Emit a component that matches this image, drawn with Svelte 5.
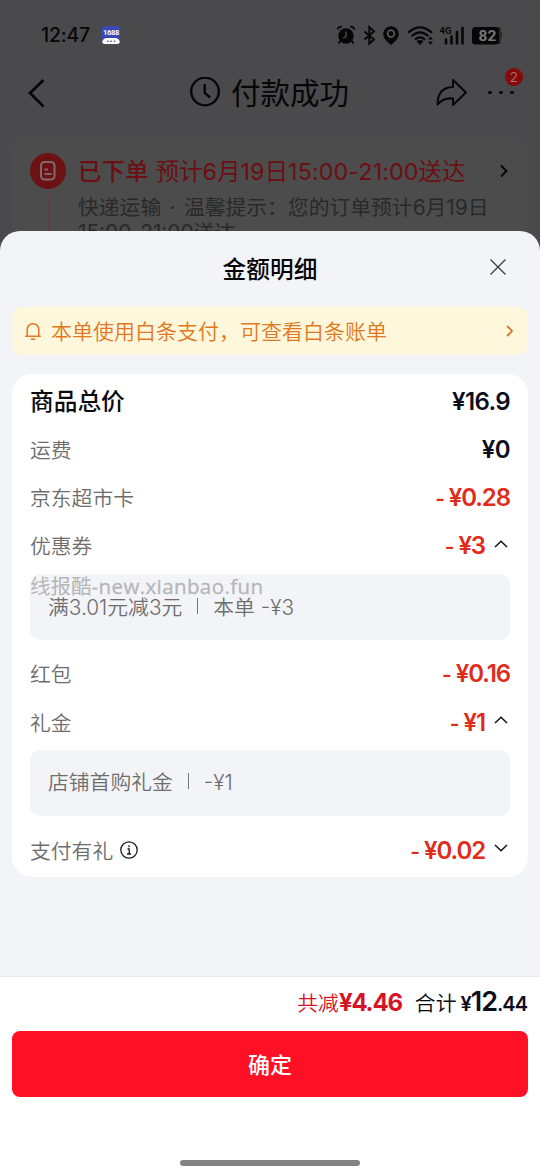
<script>
  const rows = [
    { label: '商品总价', value: '¥16.9', kind: 'total' },
    { label: '运费', value: '¥0', kind: 'plain' },
    { label: '京东超市卡', value: '¥0.28', kind: 'minus' },
    { label: '优惠券', value: '¥3', kind: 'minus', arrow: 'up', detail: ['满3.01元减3元', '本单 -¥3'], mark: true },
    { label: '红包', value: '¥0.16', kind: 'minus' },
    { label: '礼金', value: '¥1', kind: 'minus', arrow: 'up', detail: ['店铺首购礼金', '-¥1'] },
    { label: '支付有礼', value: '¥0.02', kind: 'minus', arrow: 'down', info: true }
  ];
</script>

<div class="screen">
  <div class="status">
    <span class="time">12:47</span>
    <span class="app"><b>1688</b><i>•••</i></span>
    <svg class="sysicons" width="170" height="24" viewBox="0 0 170 24">
      <g fill="#070707">
        <circle cx="11" cy="13" r="7.7" />
        <path d="M5.5 17.5L3.5 20.5M16.5 17.5L18.5 20.5M2.5 6.4Q3.3 3.5 7 3.6M19.5 6.4Q18.7 3.5 15 3.6" fill="none" stroke="#070707" stroke-width="1.8" />
        <path d="M11 8.5v5l-3 2" fill="none" stroke="#4a4a4c" stroke-width="1.5" />
        <path d="M29.5 8.5L39 16.5 34.3 20.7V4L39 8.5 29.5 16.5" fill="none" stroke="#070707" stroke-width="1.9" />
        <path d="M56 3.2a7.8 7.8 0 0 0-7.8 7.8c0 5 5 8.5 7.8 11 2.8-2.5 7.8-6 7.8-11A7.8 7.8 0 0 0 56 3.2z" />
        <circle cx="56" cy="10.6" r="3.4" fill="none" stroke="#626264" stroke-width="1.6" />
      </g>
      <g fill="none" stroke="#070707" stroke-width="2.1">
        <path d="M73 9.8Q85 -1.2 97 9.8M76.5 13.3Q85 5.5 93.5 13.3M80 16.6Q85 12.3 90 16.6" />
      </g>
      <path d="M81.5 18.3Q85 15.8 88.5 18.3L85 22z" fill="#070707" />
      <path d="M93 16.5l2.5-3 2.5 3zM93 18.7l2.5 3 2.5-3z" fill="#070707" />
      <text x="104.5" y="11" class="net">4G</text>
      <path d="M111 16.5v4M116.5 13.5v7M122 9v11.500M127.5 5v15.500" stroke="#070707" stroke-width="2.6" stroke-linecap="round" />
      <path d="M162 4h3q1 0 1 2v2q2.5 4 0 8v2q0 2-1 3h-3z" fill="#2b2b2c" />
      <rect x="137" y="4" width="27" height="17.5" rx="3.5" fill="#070707" />
      <text x="152.5" y="18.3" class="batt">82</text>
    </svg>
  </div>

  <header>
    <svg width="24" height="34" viewBox="0 0 24 34"><path d="M19.5 4L6 17 19.5 30.500" fill="none" stroke="#060608" stroke-width="2.7" /></svg>
    <h1>
      <svg width="32" height="32" viewBox="0 0 32 32" fill="none" stroke="#060608" stroke-width="2.3">
        <circle cx="16" cy="14.500" r="13.8" /><path d="M15.7 7v9l5.5 4.5" />
      </svg>
      付款成功
    </h1>
    <svg class="share" width="32" height="30" viewBox="0 0 32 30"><path d="M17 2L30 14.500 17 27V20.500Q7 19.500 1.500 26.500 1.500 9.500 17 9z" fill="none" stroke="#060608" stroke-width="2" stroke-linejoin="round" /></svg>
    <div class="more"><i></i><i></i><i></i><span class="badge">2</span></div>
  </header>

  <section class="order">
    <div class="rail">
      <span class="dot">
        <svg width="18" height="22" viewBox="0 0 18 22" fill="none" stroke="#7e6a6b" stroke-width="2">
          <rect x="2" y="2" width="13.5" height="17.5" rx="3.5" /><path d="M5.5 9.5h3.5M5.5 14h7" />
        </svg>
      </span>
      <span class="line"></span>
    </div>
    <div class="info">
      <p class="placed"><b>已下单</b><span>预计6月19日15:00-21:00送达</span></p>
      <p class="tip">快递运输 · 温馨提示：您的订单预计6月19日</p>
      <p class="tip">15:00-21:00送达</p>
    </div>
    <svg class="go" width="10" height="16" viewBox="0 0 10 16"><path d="M1 2.5L6.5 8 1 13.5" fill="none" stroke="#060608" stroke-width="1.9" /></svg>
  </section>

  <div class="sheet">
    <div class="title">
      <h2>金额明细</h2>
      <svg class="close" width="18" height="18" viewBox="0 0 18 18"><path d="M1.5 1.5l15 15M16.5 1.5l-15 15" stroke="#3a3b40" stroke-width="1.3" /></svg>
    </div>

    <div class="notice">
      <svg width="18" height="20" viewBox="0 0 18 20" fill="none" stroke="#e27720" stroke-width="1.5">
        <path d="M3.2 15V8.5a5.8 5.8 0 0 1 11.6 0V15M1.2 15.2h15.6M6.8 18.3h4.4" />
      </svg>
      <span>本单使用白条支付，可查看白条账单</span>
      <svg width="8" height="14" viewBox="0 0 8 14"><path d="M1 1.8L6 7 1 12.2" fill="none" stroke="#dd6d26" stroke-width="1.7" /></svg>
    </div>

    <div class="bill">
      {#each rows as row}
        <div class="row {row.kind}">
          <span class="label">{row.label}</span>
          {#if row.info}
            <svg class="tipicon" width="20" height="20" viewBox="0 0 20 20">
              <circle cx="10" cy="10" r="8.2" fill="none" stroke="#1a1a1a" stroke-width="1.3" />
              <path d="M10 5.2v2M8.5 9h1.7v5M8 14h4" fill="none" stroke="#1a1a1a" stroke-width="1.3" />
            </svg>
          {/if}
          <span class="value">{#if row.kind === 'minus'}<em>-</em>{/if}{row.value}</span>
          {#if row.arrow}
            <svg class="arrow" class:down={row.arrow === 'down'} width="14" height="10" viewBox="0 0 14 10"><path d="M1 8L7 2.2 13 8" fill="none" stroke="#111" stroke-width="1.5" /></svg>
          {/if}
        </div>
        {#if row.detail}
          <div class="detail" class:marked={row.mark}>
            <span>{row.detail[0]}</span><i></i><span>{row.detail[1]}</span>
            {#if row.mark}<span class="mark">线报酷<span>-new.xianbao.fun</span></span>{/if}
          </div>
        {/if}
      {/each}
    </div>

    <footer>
      <div class="sum">
        <span class="off">共减<b>¥4.46</b></span>
        <span class="all">合计</span>
        <span class="pay"><small>¥</small>12<small>.44</small></span>
      </div>
      <button>确定</button>
      <div class="home"></div>
    </footer>
  </div>
</div>

<style>
  :global(body) {
    margin: 0;
    background: #4a4a4c;
  }
  .screen {
    position: relative;
    width: 540px;
    height: 1176px;
    overflow: hidden;
    background: #4a4a4c;
    color: #060608;
    font-family: Inter, "Noto Sans CJK SC", sans-serif;
    font-weight: 350;
  }
  h1, h2, p {
    margin: 0;
    font-weight: 400;
  }
  svg {
    flex: none;
    display: block;
  }

  .status {
    display: flex;
    align-items: center;
    height: 48px;
    padding: 21px 35px 0 41px;
    box-sizing: border-box;
  }
  .time {
    width: 61px;
    font-size: 19.5px;
    font-weight: 500;
    letter-spacing: -0.2px;
  }
  .app {
    display: flex;
    flex-direction: column;
    width: 18px;
    height: 18px;
    margin-top: 1px;
    border-radius: 3px;
    overflow: hidden;
    background: #3a48b5;
    color: #fff;
    text-align: center;
  }
  .app b {
    height: 12px;
    font-family: Roboto, sans-serif;
    font-size: 7.5px;
    line-height: 14px;
    letter-spacing: -0.3px;
  }
  .app i {
    height: 6px;
    border-radius: 5px 5px 0 0;
    background: #fff;
    color: #3a48b5;
    font-size: 6px;
    line-height: 6px;
    font-style: normal;
  }
  .sysicons {
    margin-left: auto;
  }
  .net {
    font: 700 9.5px Roboto;
    fill: #070707;
  }
  .batt {
    font: 700 15.5px Roboto;
    fill: #777779;
    text-anchor: middle;
  }

  header {
    display: flex;
    align-items: center;
    height: 88px;
    padding: 1px 24px 0;
    box-sizing: border-box;
  }
  h1 {
    display: flex;
    align-items: center;
    gap: 10px;
    margin-left: 141px;
    font-size: 29.5px;
    line-height: 38px;
  }
  .share {
    margin-left: 87px;
  }
  .more {
    position: relative;
    display: flex;
    gap: 7.5px;
    margin-left: 20px;
  }
  .more i {
    width: 3.5px;
    height: 3.5px;
    border-radius: 50%;
    background: #060608;
  }
  .badge {
    position: absolute;
    left: 17px;
    top: -23px;
    width: 18px;
    height: 18px;
    border-radius: 50%;
    background: #850a0c;
    color: #a58a8b;
    font-size: 13.5px;
    line-height: 18px;
    text-align: center;
  }

  .order {
    display: flex;
    height: 140px;
    margin: 0 12px;
    padding: 17px 18px 0;
    box-sizing: border-box;
    border-radius: 20px;
    background: #4c4c4c;
  }
  .rail {
    display: flex;
    flex-direction: column;
    align-items: center;
    gap: 6px;
    width: 36px;
  }
  .dot {
    display: flex;
    align-items: center;
    justify-content: center;
    width: 36px;
    height: 36px;
    border-radius: 50%;
    background: #6c1215;
  }
  .line {
    width: 1px;
    flex: 1;
    background: #603b3d;
  }
  .info {
    flex: 1;
    padding-left: 12px;
    white-space: nowrap;
  }
  .placed {
    display: flex;
    gap: 7px;
    height: 38px;
    font-size: 23.3px;
    line-height: 38px;
    color: #6d0f12;
  }
  .placed b {
    font-weight: 500;
    letter-spacing: 0.3px;
  }
  .placed span {
    letter-spacing: 0.1px;
  }
  .tip {
    height: 25px;
    font-size: 20.8px;
    line-height: 34px;
    word-spacing: 2.5px;
    color: #292929;
  }
  .go {
    margin-top: 10px;
  }

  .sheet {
    position: absolute;
    inset: 231px 0 0;
    display: flex;
    flex-direction: column;
    border-radius: 20px 20px 0 0;
    background: #f3f4f8;
  }
  .title {
    position: relative;
    height: 76px;
  }
  h2 {
    font-size: 23.7px;
    font-weight: 500;
    line-height: 77px;
    text-align: center;
  }
  .close {
    position: absolute;
    right: 33px;
    top: 27px;
  }
  .notice {
    display: flex;
    align-items: center;
    height: 48px;
    margin: 0 12px;
    padding: 0 14px 0 12px;
    border-radius: 10px;
    background: #fff7dc;
    color: #e27720;
    font-size: 21px;
  }
  .notice span {
    flex: 1;
    margin: 0 0 2px 9px;
  }

  .bill {
    height: 503px;
    margin: 19px 12px 0;
    padding: 3px 18px 0;
    box-sizing: border-box;
    border-radius: 20px;
    background: #fff;
  }
  .row {
    display: flex;
    align-items: center;
    height: 48.2px;
  }
  .label {
    margin-bottom: 1px;
    font-size: 20.8px;
    color: #6d6d6d;
  }
  .total .label {
    margin-bottom: 3px;
    font-size: 23.7px;
    font-weight: 500;
    color: #0b0b0d;
  }
  .tipicon {
    margin-left: 6px;
  }
  .value {
    margin-left: auto;
    font-size: 24px;
    font-weight: 600;
    letter-spacing: -0.6px;
    color: #0d0d1c;
  }
  .minus .value {
    letter-spacing: -1.1px;
    color: #e02c1b;
  }
  .value em {
    margin-right: 5px;
    font-style: normal;
    font-size: 21px;
  }
  .arrow {
    margin: 0 2px 4px 9px;
  }
  .down {
    transform: scaleY(-1);
  }
  .detail {
    position: relative;
    display: flex;
    align-items: center;
    height: 66px;
    margin: 4px 0 10px;
    padding-left: 18px;
    box-sizing: border-box;
    border-radius: 10px;
    background: #f3f4f8;
    color: #6d6d6d;
    font-size: 20.8px;
    line-height: 24px;
  }
  .marked {
    padding-top: 2px;
  }
  .detail i {
    width: 1px;
    height: 16px;
    margin: 0 15px 4px;
    background: #777;
  }
  .mark {
    position: absolute;
    left: 0;
    top: 0;
    font-size: 20.5px;
    line-height: 24px;
    color: #b5b6b8;
    font-weight: 400;
    white-space: nowrap;
  }
  .mark span {
    font-family: "Open Sans", sans-serif;
    font-weight: 500;
    letter-spacing: 0.4px;
    -webkit-text-stroke: 0.3px #b5b6b8;
  }

  footer {
    display: flex;
    flex-direction: column;
    height: 200px;
    margin-top: auto;
    padding: 0 12px;
    box-sizing: border-box;
    border-top: 1px solid #e9eaee;
    background: #fff;
  }
  .sum {
    display: flex;
    justify-content: flex-end;
    align-items: baseline;
    height: 54px;
    line-height: 50px;
    font-size: 20.8px;
  }
  .off {
    color: #d51425;
  }
  .off b {
    font-size: 24px;
    letter-spacing: -1.2px;
  }
  .all {
    margin: 0 4px 0 13px;
  }
  .pay {
    margin-right: 1px;
    color: #0d0d1c;
    font-size: 27px;
    font-weight: 600;
    letter-spacing: -1px;
  }
  .pay small {
    font-size: 20px;
  }
  button {
    height: 66px;
    border: 0;
    border-radius: 8px;
    padding: 0 0 3px;
    background: #ff1024;
    color: #fff;
    font: 500 22px "Noto Sans CJK SC", sans-serif;
  }
  .home {
    width: 180px;
    height: 6px;
    margin: 63px auto 0;
    border-radius: 3px;
    background: #828282;
  }
</style>
